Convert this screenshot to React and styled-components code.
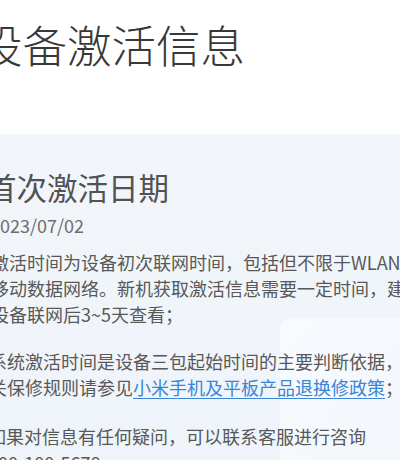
import React from "react";
import styled, { createGlobalStyle } from "styled-components";

const GlobalStyle = createGlobalStyle`
  html, body {
    margin: 0;
    padding: 0;
    background: #ffffff;
  }
  body {
    width: 400px;
    height: 460px;
    overflow: hidden;
    font-family: "Noto Sans CJK SC", "Noto Sans", sans-serif;
    -webkit-font-smoothing: antialiased;
  }
`;

const Style = {
  Page: styled.div`
    width: 400px;
    height: 460px;
    display: flex;
    flex-direction: column;
    overflow: hidden;
  `,

  Header: styled.header`
    padding: 16px 0 62px;
  `,

  Title: styled.h1`
    margin: 0 0 0 -22px;
    font-size: 44.5px;
    line-height: 56px;
    font-weight: 300;
    color: #383838;
    white-space: nowrap;
  `,

  Card: styled.section`
    position: relative;
    flex: 1;
    padding-top: 33px;
    background: linear-gradient(180deg, #f2f6fb 0%, #eff4fa 100%);
    overflow: hidden;
  `,

  Deco: styled.svg`
    position: absolute;
    left: 0;
    top: 0;
    width: 400px;
    height: 326px;
    pointer-events: none;
  `,

  Body: styled.div`
    position: relative;
    display: flex;
    flex-direction: column;
  `,

  Heading: styled.h2`
    margin: 0 0 0 -14px;
    font-size: 30.5px;
    line-height: 40px;
    font-weight: 400;
    color: #525252;
    white-space: nowrap;
  `,

  Date: styled.div`
    margin: 5px 0 0 -10px;
    font-size: 18px;
    line-height: 26px;
    color: #6e6e6e;
  `,

  Paragraph: styled.p`
    margin: ${(p) => p.$gap}px 0 0 ${(p) => p.$shift}px;
    font-size: 18px;
    line-height: 26px;
    color: #585858;
  `,

  Line: styled.span`
    display: block;
    white-space: nowrap;
  `,

  Link: styled.a`
    color: #3a85d8;
    text-decoration: underline;
    text-decoration-thickness: 1px;
    text-underline-offset: 3px;
  `,
};

// soft panel and ring drawn behind the card text
const CardDecoration = () => (
  <Style.Deco viewBox="0 0 400 326">
    <defs>
      <linearGradient id="panel" x1="0" y1="0" x2="1" y2="1">
        <stop offset="0" stopColor="#f8fbfe" stopOpacity="0.95" />
        <stop offset="1" stopColor="#f3f7fc" stopOpacity="0.6" />
      </linearGradient>
      <filter id="soft">
        <feGaussianBlur stdDeviation="2.5" />
      </filter>
    </defs>
    <rect x="280" y="184" width="160" height="200" rx="12" fill="url(#panel)" />
    <circle
      cx="520"
      cy="420"
      r="140"
      fill="none"
      stroke="#ffffff"
      strokeOpacity="0.75"
      strokeWidth="10"
      filter="url(#soft)"
    />
  </Style.Deco>
);

export default function App() {
  return (
    <>
      <GlobalStyle />
      <Style.Page>
        <Style.Header>
          <Style.Title>设备激活信息</Style.Title>
        </Style.Header>

        <Style.Card>
          <CardDecoration />
          <Style.Body>
            <Style.Heading>首次激活日期</Style.Heading>
            <Style.Date>2023/07/02</Style.Date>

            <Style.Paragraph $gap={11} $shift={-9}>
              <Style.Line>激活时间为设备初次联网时间，包括但不限于WLAN、</Style.Line>
              <Style.Line>移动数据网络。新机获取激活信息需要一定时间，建议</Style.Line>
              <Style.Line>设备联网后3~5天查看；</Style.Line>
            </Style.Paragraph>

            <Style.Paragraph $gap={21} $shift={-11}>
              <Style.Line>系统激活时间是设备三包起始时间的主要判断依据，相</Style.Line>
              <Style.Line>
                关保修规则请参见
                <Style.Link href="#">小米手机及平板产品退换修政策</Style.Link>；
              </Style.Line>
            </Style.Paragraph>

            <Style.Paragraph $gap={23} $shift={-12}>
              <Style.Line>如果对信息有任何疑问，可以联系客服进行咨询</Style.Line>
              <Style.Line>400-100-5678</Style.Line>
            </Style.Paragraph>
          </Style.Body>
        </Style.Card>
      </Style.Page>
    </>
  );
}
